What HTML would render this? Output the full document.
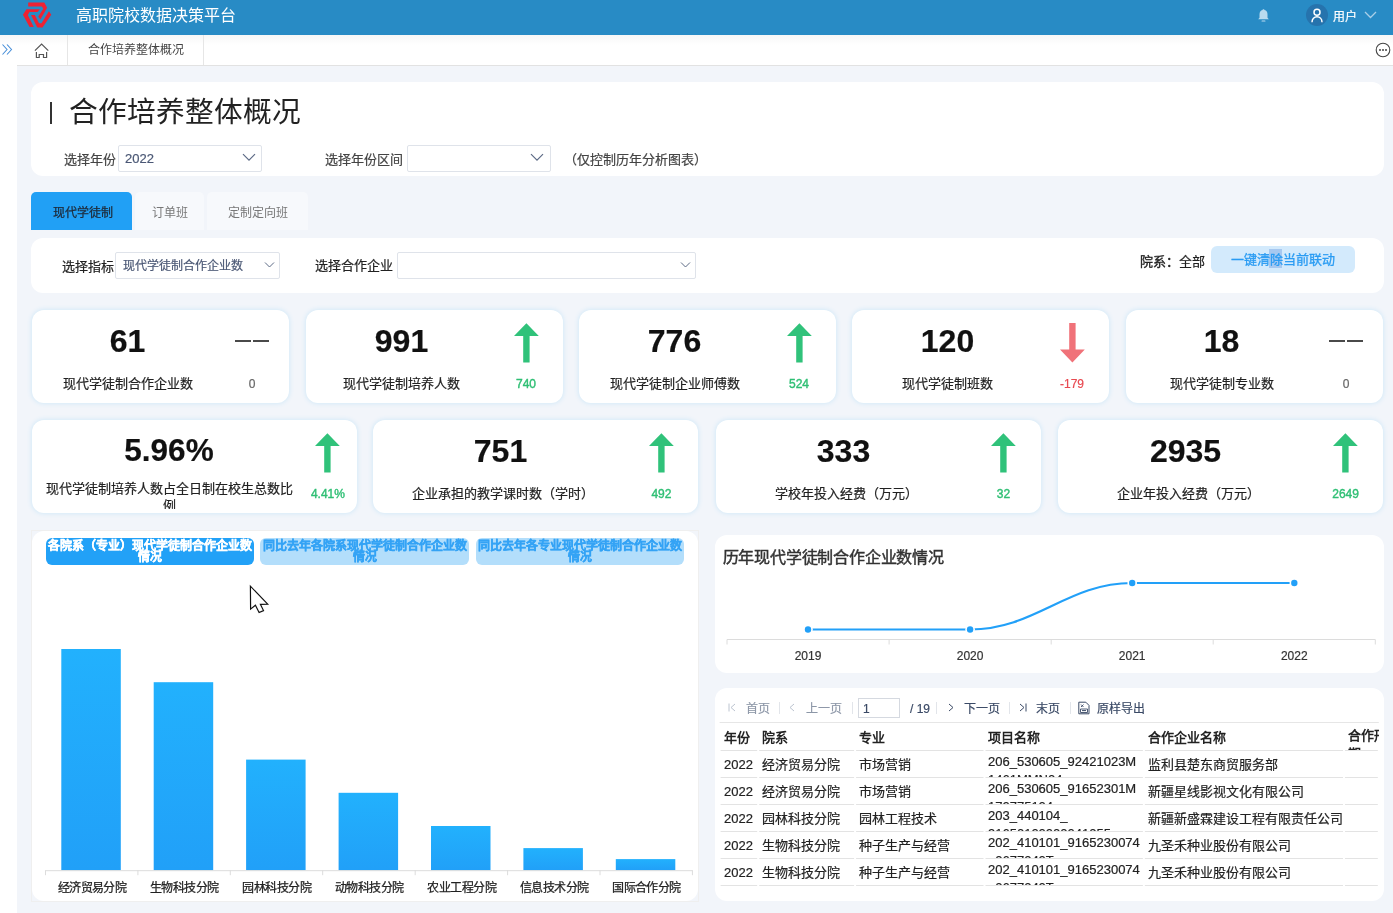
<!DOCTYPE html>
<html lang="zh-CN"><head><meta charset="utf-8">
<style>
*{box-sizing:border-box;margin:0;padding:0}
html,body{width:1393px;height:913px;overflow:hidden;background:#f2f5fa;font-family:"Liberation Sans",sans-serif;color:#333}
.t{position:absolute;white-space:nowrap;line-height:1}
.abs{position:absolute}
.panel{position:absolute;background:#fff;border-radius:12px}
.sel{position:absolute;background:#fff;border:1px solid #dfe3ea;border-radius:2px}
.card{position:absolute;background:#fff;border-radius:12px;box-shadow:0 0 4px 1px #d5eaf8}
.num{position:absolute;font-weight:bold;font-size:32px;color:#111;line-height:1;white-space:nowrap}
.lbl{position:absolute;font-size:13px;color:#222;line-height:1;white-space:nowrap}
.chg{position:absolute;font-size:12px;line-height:1;white-space:nowrap}
.green{color:#2fbf74}
.red{color:#e84a51}
.grey{color:#666}
.dash{position:absolute;height:2px;background:#4a4a4a}
.med{-webkit-text-stroke:0.3px currentColor}
body{will-change:transform}
.t,.lbl,.num,.chg{-webkit-text-stroke:0.2px currentColor}
</style></head><body>

<div class="abs" style="left:0;top:0;width:1393px;height:35px;background:#288bc5"></div>
<svg class="abs" style="left:18px;top:0" width="40" height="32" viewBox="0 0 40 32"><g fill="#ee2233">
<polygon points="10.2,2.5 26.3,2.5 29.1,7.7 22.4,19.6 20.3,16.5 25.3,8.8 23.8,6.5 10.2,6.5"/>
<polygon points="21.8,9.3 8.4,9.3 4.9,14.7 11.6,27 15.8,27 9.8,15.1 11.6,11.9 19.6,11.9"/>
<polygon points="13,15.1 16.8,15.1 21,23.2 23.5,23.2 30.9,11.2 33.3,14.7 24.5,27.4 19.3,27.4"/>
</g></svg>
<div class="t" style="left:76px;top:8px;font-size:16px;color:#fff;-webkit-text-stroke:0">高职院校数据决策平台</div>
<svg class="abs" style="left:1256px;top:8px" width="15" height="15" viewBox="0 0 15 15">
<path d="M7.5 1.2c.7 0 1 .4 1 .9 2 .5 3 2.2 3 4.3v3.3l1.3 1.6H2.2l1.3-1.6V6.4c0-2.1 1-3.8 3-4.3 0-.5.3-.9 1-.9z" fill="#b8daef"/>
<rect x="5.5" y="12.4" width="4" height="1.2" rx=".6" fill="#b8daef"/></svg>
<div class="abs" style="left:1306px;top:4px;width:22px;height:22px;border-radius:50%;background:#2673ad"></div>
<svg class="abs" style="left:1306px;top:4px" width="22" height="22" viewBox="0 0 22 22">
<circle cx="11" cy="8.2" r="3" fill="none" stroke="#fff" stroke-width="1.5"/>
<path d="M6 18.2c0-3.2 2.2-5.4 5-5.4s5 2.2 5 5.4" fill="none" stroke="#fff" stroke-width="1.5"/></svg>
<div class="t" style="left:1332.5px;top:11px;font-size:12px;color:#fff">用户</div>
<svg class="abs" style="left:1364px;top:11px" width="13" height="8" viewBox="0 0 13 8"><path d="M1 1l5.5 5.5L12 1" fill="none" stroke="#a9cfe8" stroke-width="1.3"/></svg>
<div class="abs" style="left:0;top:35px;width:1393px;height:31px;background:linear-gradient(#f7f7f7,#fff 10px)"></div>
<div class="abs" style="left:17px;top:65px;width:1376px;height:1px;background:#e2e2e2"></div>
<svg class="abs" style="left:1px;top:43px" width="12" height="13" viewBox="0 0 12 13"><path d="M1.5 1.5l4.5 5-4.5 5M6 1.5l4.5 5-4.5 5" fill="none" stroke="#4a90d9" stroke-width="1.1"/></svg>
<svg class="abs" style="left:34px;top:42.6px" width="16" height="16" viewBox="0 0 16 16"><path d="M0.9 7.6L7.6 1.1L14.3 7.6M2.4 8.9V14.5H5.2V11.5H9.5V14.5H12.6V8.9" fill="none" stroke="#555" stroke-width="1.2"/></svg>
<div class="abs" style="left:67px;top:35px;width:1px;height:30px;background:#e6e6e6"></div>
<div class="t" style="left:88px;top:44px;font-size:12px;color:#444;-webkit-text-stroke:0">合作培养整体概况</div>
<div class="abs" style="left:203px;top:35px;width:1px;height:30px;background:#e6e6e6"></div>
<svg class="abs" style="left:1375px;top:42px" width="16" height="16" viewBox="0 0 16 16"><circle cx="8" cy="8" r="6.8" fill="none" stroke="#444" stroke-width="1.1"/><circle cx="5" cy="8" r="1" fill="#444"/><circle cx="8" cy="8" r="1" fill="#444"/><circle cx="11" cy="8" r="1" fill="#444"/></svg>
<div class="abs" style="left:0;top:66px;width:17px;height:847px;background:#fff"></div>
<div class="panel" style="left:31px;top:82px;width:1353px;height:94px"></div>
<div class="abs" style="left:49.5px;top:102px;width:2.5px;height:22px;background:#333"></div>
<div class="t" style="left:69px;top:98px;font-size:28.7px;color:#222;-webkit-text-stroke:0">合作培养整体概况</div>
<div class="t" style="left:64px;top:153px;font-size:13px;color:#444">选择年份</div>
<div class="sel" style="left:118px;top:145px;width:144px;height:27px"></div>
<div class="t" style="left:125px;top:152px;font-size:13px;color:#4b5875">2022</div>
<svg class="abs" style="left:242px;top:153px" width="14" height="9" viewBox="0 0 14 9"><path d="M1 1.2l6 6 6-6" fill="none" stroke="#5d6b86" stroke-width="1.2"/></svg>
<div class="t" style="left:325px;top:153px;font-size:13px;color:#444">选择年份区间</div>
<div class="sel" style="left:407px;top:145px;width:144px;height:27px"></div>
<svg class="abs" style="left:530px;top:153px" width="14" height="9" viewBox="0 0 14 9"><path d="M1 1.2l6 6 6-6" fill="none" stroke="#5d6b86" stroke-width="1.2"/></svg>
<div class="t" style="left:563.5px;top:153px;font-size:13px;color:#444">（仅控制历年分析图表）</div>
<div class="abs" style="left:31px;top:192px;width:101px;height:38px;background:#21a0f5;border-radius:5px 5px 0 0"></div>
<div class="t med" style="left:52.5px;top:207px;font-size:12px;color:#1e2a38;-webkit-text-stroke:0.25px #1e2a38">现代学徒制</div>
<div class="abs" style="left:135px;top:192px;width:69px;height:38px;background:#f7f9fc;border-radius:5px 5px 0 0"></div>
<div class="t" style="left:152px;top:207px;font-size:12px;color:#777;-webkit-text-stroke:0">订单班</div>
<div class="abs" style="left:207px;top:192px;width:101px;height:38px;background:#f7f9fc;border-radius:5px 5px 0 0"></div>
<div class="t" style="left:228px;top:207px;font-size:12px;color:#777;-webkit-text-stroke:0">定制定向班</div>
<div class="panel" style="left:31px;top:238px;width:1353px;height:55px"></div>
<div class="t" style="left:62px;top:260px;font-size:13px;color:#222">选择指标</div>
<div class="sel" style="left:115px;top:252px;width:165px;height:27px"></div>
<div class="t" style="left:122.5px;top:260px;font-size:12px;color:#4b5875">现代学徒制合作企业数</div>
<svg class="abs" style="left:264px;top:261px" width="11" height="8" viewBox="0 0 11 8"><path d="M1 1.5l4.5 4.5L10 1.5" fill="none" stroke="#5d6b86" stroke-width="1"/></svg>
<div class="t" style="left:315px;top:259px;font-size:13px;color:#222">选择合作企业</div>
<div class="sel" style="left:397px;top:252px;width:299px;height:27px"></div>
<svg class="abs" style="left:680px;top:261px" width="11" height="8" viewBox="0 0 11 8"><path d="M1 1.5l4.5 4.5L10 1.5" fill="none" stroke="#5d6b86" stroke-width="1"/></svg>
<div class="t" style="left:1140px;top:255px;font-size:13px;color:#222"><span style="-webkit-text-stroke:0.35px #222">院系：</span>全部</div>
<div class="abs" style="left:1211px;top:246px;width:144px;height:27px;background:#d3eafc;border-radius:6px"></div>
<div class="abs" style="left:1269px;top:249px;width:13px;height:19px;background:#a6c8f0"></div>
<div class="t" style="left:1231px;top:253px;font-size:13px;color:#2a9cf3;-webkit-text-stroke:0.3px #2a9cf3">一键清除当前联动</div>
<div class="card" style="left:32px;top:310px;width:257px;height:93px"></div>
<div class="num" style="left:-22.5px;top:325px;width:300px;text-align:center;">61</div>
<div class="lbl" style="left:-22.5px;top:377px;width:300px;text-align:center;">现代学徒制合作企业数</div>
<div class="dash" style="left:235px;top:340px;width:16px"></div>
<div class="dash" style="left:252.5px;top:340px;width:16px"></div>
<div class="chg grey" style="left:102px;top:378px;width:300px;text-align:center;">0</div>
<div class="card" style="left:306px;top:310px;width:257px;height:93px"></div>
<div class="num" style="left:251.5px;top:325px;width:300px;text-align:center;">991</div>
<div class="lbl" style="left:251.5px;top:377px;width:300px;text-align:center;">现代学徒制培养人数</div>
<svg class="abs" style="left:513.5px;top:322.5px" width="25" height="40" viewBox="0 0 25 40"><polygon points="12.4,0.3 24.8,13 15.6,13 15.6,39.5 9.2,39.5 9.2,13 0,13" fill="#30c27a"/></svg>
<div class="chg green" style="left:376px;top:378px;width:300px;text-align:center;-webkit-text-stroke:0.4px currentColor">740</div>
<div class="card" style="left:579px;top:310px;width:257px;height:93px"></div>
<div class="num" style="left:524.5px;top:325px;width:300px;text-align:center;">776</div>
<div class="lbl" style="left:524.5px;top:377px;width:300px;text-align:center;">现代学徒制企业师傅数</div>
<svg class="abs" style="left:786.5px;top:322.5px" width="25" height="40" viewBox="0 0 25 40"><polygon points="12.4,0.3 24.8,13 15.6,13 15.6,39.5 9.2,39.5 9.2,13 0,13" fill="#30c27a"/></svg>
<div class="chg green" style="left:649px;top:378px;width:300px;text-align:center;-webkit-text-stroke:0.4px currentColor">524</div>
<div class="card" style="left:852px;top:310px;width:257px;height:93px"></div>
<div class="num" style="left:797.5px;top:325px;width:300px;text-align:center;">120</div>
<div class="lbl" style="left:797.5px;top:377px;width:300px;text-align:center;">现代学徒制班数</div>
<svg class="abs" style="left:1059.5px;top:322.5px" width="25" height="40" viewBox="0 0 25 40"><polygon points="9.2,0 15.6,0 15.6,26.5 24.8,26.5 12.4,39.5 0,26.5 9.2,26.5" fill="#f07279"/></svg>
<div class="chg red" style="left:922px;top:378px;width:300px;text-align:center;">-179</div>
<div class="card" style="left:1126px;top:310px;width:257px;height:93px"></div>
<div class="num" style="left:1071.5px;top:325px;width:300px;text-align:center;">18</div>
<div class="lbl" style="left:1071.5px;top:377px;width:300px;text-align:center;">现代学徒制专业数</div>
<div class="dash" style="left:1329px;top:340px;width:16px"></div>
<div class="dash" style="left:1346.5px;top:340px;width:16px"></div>
<div class="chg grey" style="left:1196px;top:378px;width:300px;text-align:center;">0</div>
<div class="card" style="left:32px;top:420px;width:325px;height:93px"></div>
<div class="num" style="left:19px;top:435px;width:300px;text-align:center;font-size:31.5px">5.96%</div>
<div class="abs" style="left:32px;top:420px;width:325px;height:89px;overflow:hidden"><div class="lbl" style="left:-13px;top:59.5px;width:300px;text-align:center;line-height:17.5px">现代学徒制培养人数占全日制在校生总数比<br>例</div></div>
<svg class="abs" style="left:315.4px;top:432.5px" width="25" height="40" viewBox="0 0 25 40"><polygon points="12.4,0.3 24.8,13 15.6,13 15.6,39.5 9.2,39.5 9.2,13 0,13" fill="#30c27a"/></svg>
<div class="chg green" style="left:177.89999999999998px;top:488px;width:300px;text-align:center;-webkit-text-stroke:0.4px currentColor">4.41%</div>
<div class="card" style="left:373px;top:420px;width:325px;height:93px"></div>
<div class="num" style="left:350.5px;top:435px;width:300px;text-align:center;">751</div>
<div class="lbl" style="left:353.0px;top:487px;width:300px;text-align:center;">企业承担的教学课时数（学时）</div>
<svg class="abs" style="left:648.9px;top:432.5px" width="25" height="40" viewBox="0 0 25 40"><polygon points="12.4,0.3 24.8,13 15.6,13 15.6,39.5 9.2,39.5 9.2,13 0,13" fill="#30c27a"/></svg>
<div class="chg green" style="left:511.4px;top:488px;width:300px;text-align:center;-webkit-text-stroke:0.4px currentColor">492</div>
<div class="card" style="left:716px;top:420px;width:325px;height:93px"></div>
<div class="num" style="left:693.5px;top:435px;width:300px;text-align:center;">333</div>
<div class="lbl" style="left:696.0px;top:487px;width:300px;text-align:center;">学校年投入经费（万元）</div>
<svg class="abs" style="left:991.0px;top:432.5px" width="25" height="40" viewBox="0 0 25 40"><polygon points="12.4,0.3 24.8,13 15.6,13 15.6,39.5 9.2,39.5 9.2,13 0,13" fill="#30c27a"/></svg>
<div class="chg green" style="left:853.5px;top:488px;width:300px;text-align:center;-webkit-text-stroke:0.4px currentColor">32</div>
<div class="card" style="left:1058px;top:420px;width:325px;height:93px"></div>
<div class="num" style="left:1035.5px;top:435px;width:300px;text-align:center;">2935</div>
<div class="lbl" style="left:1038.0px;top:487px;width:300px;text-align:center;">企业年投入经费（万元）</div>
<svg class="abs" style="left:1333.1px;top:432.5px" width="25" height="40" viewBox="0 0 25 40"><polygon points="12.4,0.3 24.8,13 15.6,13 15.6,39.5 9.2,39.5 9.2,13 0,13" fill="#30c27a"/></svg>
<div class="chg green" style="left:1195.6px;top:488px;width:300px;text-align:center;-webkit-text-stroke:0.4px currentColor">2649</div>
<div class="abs" style="left:31px;top:530px;width:668px;height:372px;border:1px solid #efefef"></div>
<div class="panel" style="left:32px;top:531px;width:666px;height:370px"></div>
<div class="abs" style="left:46px;top:538px;width:208px;height:27px;background:#22a1f7;border-radius:6px"></div>
<div class="abs" style="left:26px;top:541px;width:248px;text-align:center;font-size:12px;line-height:11px;font-weight:bold;color:#fff;white-space:nowrap;-webkit-text-stroke:0.35px #fff">各院系（专业）现代学徒制合作企业数<br>情况</div>
<div class="abs" style="left:260px;top:538px;width:209px;height:27px;background:#b3defb;border-radius:6px"></div>
<div class="abs" style="left:240px;top:541px;width:249px;text-align:center;font-size:12px;line-height:11px;font-weight:bold;color:#34a3f5;white-space:nowrap;-webkit-text-stroke:0.35px #34a3f5">同比去年各院系现代学徒制合作企业数<br>情况</div>
<div class="abs" style="left:476px;top:538px;width:208px;height:27px;background:#b3defb;border-radius:6px"></div>
<div class="abs" style="left:456px;top:541px;width:248px;text-align:center;font-size:12px;line-height:11px;font-weight:bold;color:#34a3f5;white-space:nowrap;-webkit-text-stroke:0.35px #34a3f5">同比去年各专业现代学徒制合作企业数<br>情况</div>
<svg class="abs" style="left:0;top:0" width="1393" height="913" viewBox="0 0 1393 913">
<defs><linearGradient id="bg" x1="0" y1="0" x2="0" y2="1"><stop offset="0" stop-color="#22b1fd"/><stop offset="1" stop-color="#21a0f8"/></linearGradient></defs>
<rect x="61.3" y="649.0" width="59.5" height="221.2" fill="url(#bg)"/>
<rect x="153.7" y="682.2" width="59.5" height="188.0" fill="url(#bg)"/>
<rect x="246.1" y="759.6" width="59.5" height="110.6" fill="url(#bg)"/>
<rect x="338.6" y="792.8" width="59.5" height="77.4" fill="url(#bg)"/>
<rect x="431.0" y="826.0" width="59.5" height="44.2" fill="url(#bg)"/>
<rect x="523.4" y="848.1" width="59.5" height="22.1" fill="url(#bg)"/>
<rect x="615.8" y="859.1" width="59.5" height="11.1" fill="url(#bg)"/>
<path d="M45.5 870.7H692.4" stroke="#dcdcdc" stroke-width="1"/>
<path d="M45.5 870.2v5" stroke="#dcdcdc" stroke-width="1"/>
<path d="M137.9 870.2v5" stroke="#dcdcdc" stroke-width="1"/>
<path d="M230.3 870.2v5" stroke="#dcdcdc" stroke-width="1"/>
<path d="M322.7 870.2v5" stroke="#dcdcdc" stroke-width="1"/>
<path d="M415.2 870.2v5" stroke="#dcdcdc" stroke-width="1"/>
<path d="M507.6 870.2v5" stroke="#dcdcdc" stroke-width="1"/>
<path d="M600.0 870.2v5" stroke="#dcdcdc" stroke-width="1"/>
<path d="M692.4 870.2v5" stroke="#dcdcdc" stroke-width="1"/>
<path d="M250.4 586.2L250.6 609.1L255.4 605.2L259.1 612.5L263.5 610.6L260.4 604.3L267.7 604.1Z" fill="#fff" stroke="#111" stroke-width="1.2"/>
</svg>
<div class="t" style="left:32.0px;top:882px;width:120px;text-align:center;font-size:12px;letter-spacing:-0.55px;color:#222;-webkit-text-stroke:0.25px #222">经济贸易分院</div>
<div class="t" style="left:124.4px;top:882px;width:120px;text-align:center;font-size:12px;letter-spacing:-0.55px;color:#222;-webkit-text-stroke:0.25px #222">生物科技分院</div>
<div class="t" style="left:216.8px;top:882px;width:120px;text-align:center;font-size:12px;letter-spacing:-0.55px;color:#222;-webkit-text-stroke:0.25px #222">园林科技分院</div>
<div class="t" style="left:309.2px;top:882px;width:120px;text-align:center;font-size:12px;letter-spacing:-0.55px;color:#222;-webkit-text-stroke:0.25px #222">动物科技分院</div>
<div class="t" style="left:401.7px;top:882px;width:120px;text-align:center;font-size:12px;letter-spacing:-0.55px;color:#222;-webkit-text-stroke:0.25px #222">农业工程分院</div>
<div class="t" style="left:494.1px;top:882px;width:120px;text-align:center;font-size:12px;letter-spacing:-0.55px;color:#222;-webkit-text-stroke:0.25px #222">信息技术分院</div>
<div class="t" style="left:586.5px;top:882px;width:120px;text-align:center;font-size:12px;letter-spacing:-0.55px;color:#222;-webkit-text-stroke:0.25px #222">国际合作分院</div>
<div class="panel" style="left:715px;top:535px;width:669px;height:138px"></div>
<div class="t" style="left:722.5px;top:550px;font-size:16px;letter-spacing:-0.2px;color:#333;-webkit-text-stroke:0.45px #333">历年现代学徒制合作企业数情况</div>
<svg class="abs" style="left:0;top:0" width="1393" height="913" viewBox="0 0 1393 913">
<path d="M727.0 639.5H1375.3" stroke="#dcdcdc" stroke-width="1"/>
<path d="M727.0 639.5v5" stroke="#dcdcdc" stroke-width="1"/>
<path d="M889.1 639.5v5" stroke="#dcdcdc" stroke-width="1"/>
<path d="M1051.2 639.5v5" stroke="#dcdcdc" stroke-width="1"/>
<path d="M1213.2 639.5v5" stroke="#dcdcdc" stroke-width="1"/>
<path d="M1375.3 639.5v5" stroke="#dcdcdc" stroke-width="1"/>
<path d="M808.0 629.5L970.1 629.5C1035.1 629.5 1067.2 583 1132.2 583L1294.3 583" fill="none" stroke="#22a0f8" stroke-width="2.2"/>
<circle cx="808.0" cy="629.5" r="4.8" fill="#fff"/><circle cx="808.0" cy="629.5" r="3.2" fill="#22a0f8"/>
<circle cx="970.1" cy="629.5" r="4.8" fill="#fff"/><circle cx="970.1" cy="629.5" r="3.2" fill="#22a0f8"/>
<circle cx="1132.2" cy="583" r="4.8" fill="#fff"/><circle cx="1132.2" cy="583" r="3.2" fill="#22a0f8"/>
<circle cx="1294.3" cy="583" r="4.8" fill="#fff"/><circle cx="1294.3" cy="583" r="3.2" fill="#22a0f8"/>
</svg>
<div class="t" style="left:768.0px;top:650px;width:80px;text-align:center;font-size:12px;color:#333">2019</div>
<div class="t" style="left:930.1px;top:650px;width:80px;text-align:center;font-size:12px;color:#333">2020</div>
<div class="t" style="left:1092.2px;top:650px;width:80px;text-align:center;font-size:12px;color:#333">2021</div>
<div class="t" style="left:1254.3px;top:650px;width:80px;text-align:center;font-size:12px;color:#333">2022</div>
<div class="panel" style="left:715px;top:688px;width:669px;height:213px"></div>
<svg class="abs" style="left:727px;top:702px" width="10" height="11" viewBox="0 0 10 11"><path d="M2 1.5v8M8 2L4 5.5 8 9" fill="none" stroke="#bcc4d0" stroke-width="1"/></svg>
<div class="t" style="left:745.5px;top:703px;font-size:12px;color:#8d97a8">首页</div>
<div class="abs" style="left:779px;top:702px;width:1px;height:12px;background:#e2e5ea"></div>
<svg class="abs" style="left:788px;top:702px" width="8" height="11" viewBox="0 0 8 11"><path d="M6 2L2 5.5 6 9" fill="none" stroke="#bcc4d0" stroke-width="1"/></svg>
<div class="t" style="left:806px;top:703px;font-size:12px;color:#8d97a8">上一页</div>
<div class="abs" style="left:852px;top:702px;width:1px;height:12px;background:#e2e5ea"></div>
<div class="abs" style="left:858px;top:698px;width:42px;height:20px;border:1px solid #d5d9e0;background:#fff"></div>
<div class="t" style="left:863px;top:703px;font-size:12px;color:#3b4a66">1</div>
<div class="t" style="left:910px;top:703px;font-size:12px;color:#3b4a66">/ 19</div>
<div class="abs" style="left:936px;top:702px;width:1px;height:12px;background:#e2e5ea"></div>
<svg class="abs" style="left:947px;top:702px" width="8" height="11" viewBox="0 0 8 11"><path d="M2 2l4 3.5L2 9" fill="none" stroke="#3b4a66" stroke-width="1"/></svg>
<div class="t" style="left:963.5px;top:703px;font-size:12px;color:#3b4a66">下一页</div>
<div class="abs" style="left:1009px;top:702px;width:1px;height:12px;background:#e2e5ea"></div>
<svg class="abs" style="left:1018px;top:702px" width="10" height="11" viewBox="0 0 10 11"><path d="M2 2l4 3.5L2 9M8 1.5v8" fill="none" stroke="#3b4a66" stroke-width="1"/></svg>
<div class="t" style="left:1036px;top:703px;font-size:12px;color:#3b4a66">末页</div>
<div class="abs" style="left:1070px;top:702px;width:1px;height:12px;background:#e2e5ea"></div>
<svg class="abs" style="left:1077px;top:701px" width="14" height="14" viewBox="0 0 14 14"><path d="M1.8 1.2h7l3.2 3.2v8.4H1.8z" fill="none" stroke="#3b4a66" stroke-width="1"/><path d="M4 3.5l2.5 2.5M6.5 3.5L4 6" stroke="#3b4a66" stroke-width=".9"/><path d="M3.5 8h7v3.5h-7z" fill="none" stroke="#3b4a66" stroke-width=".9"/><path d="M5 9.6h4" stroke="#3b4a66" stroke-width="1"/></svg>
<div class="t" style="left:1097px;top:703px;font-size:12px;color:#3b4a66">原样导出</div>
<svg class="abs" style="left:0;top:0" width="1393" height="913" viewBox="0 0 1393 913">
<path d="M719.6 722.5H1378.8" stroke="#e6e6e6" stroke-width="1"/>
<path d="M720.6 750.5H757.2" stroke="#e3e3e3" stroke-width="1"/>
<path d="M759.2 750.5H854.1" stroke="#e3e3e3" stroke-width="1"/>
<path d="M856.1 750.5H983.5" stroke="#e3e3e3" stroke-width="1"/>
<path d="M985.5 750.5H1142.9" stroke="#e3e3e3" stroke-width="1"/>
<path d="M1144.9 750.5H1343.0" stroke="#e3e3e3" stroke-width="1"/>
<path d="M1345.0 750.5H1377.8" stroke="#e3e3e3" stroke-width="1"/>
<path d="M720.6 777.5H757.2" stroke="#e3e3e3" stroke-width="1"/>
<path d="M759.2 777.5H854.1" stroke="#e3e3e3" stroke-width="1"/>
<path d="M856.1 777.5H983.5" stroke="#e3e3e3" stroke-width="1"/>
<path d="M985.5 777.5H1142.9" stroke="#e3e3e3" stroke-width="1"/>
<path d="M1144.9 777.5H1343.0" stroke="#e3e3e3" stroke-width="1"/>
<path d="M1345.0 777.5H1377.8" stroke="#e3e3e3" stroke-width="1"/>
<path d="M720.6 804.5H757.2" stroke="#e3e3e3" stroke-width="1"/>
<path d="M759.2 804.5H854.1" stroke="#e3e3e3" stroke-width="1"/>
<path d="M856.1 804.5H983.5" stroke="#e3e3e3" stroke-width="1"/>
<path d="M985.5 804.5H1142.9" stroke="#e3e3e3" stroke-width="1"/>
<path d="M1144.9 804.5H1343.0" stroke="#e3e3e3" stroke-width="1"/>
<path d="M1345.0 804.5H1377.8" stroke="#e3e3e3" stroke-width="1"/>
<path d="M720.6 831.5H757.2" stroke="#e3e3e3" stroke-width="1"/>
<path d="M759.2 831.5H854.1" stroke="#e3e3e3" stroke-width="1"/>
<path d="M856.1 831.5H983.5" stroke="#e3e3e3" stroke-width="1"/>
<path d="M985.5 831.5H1142.9" stroke="#e3e3e3" stroke-width="1"/>
<path d="M1144.9 831.5H1343.0" stroke="#e3e3e3" stroke-width="1"/>
<path d="M1345.0 831.5H1377.8" stroke="#e3e3e3" stroke-width="1"/>
<path d="M720.6 858.5H757.2" stroke="#e3e3e3" stroke-width="1"/>
<path d="M759.2 858.5H854.1" stroke="#e3e3e3" stroke-width="1"/>
<path d="M856.1 858.5H983.5" stroke="#e3e3e3" stroke-width="1"/>
<path d="M985.5 858.5H1142.9" stroke="#e3e3e3" stroke-width="1"/>
<path d="M1144.9 858.5H1343.0" stroke="#e3e3e3" stroke-width="1"/>
<path d="M1345.0 858.5H1377.8" stroke="#e3e3e3" stroke-width="1"/>
<path d="M720.6 885.5H757.2" stroke="#e3e3e3" stroke-width="1"/>
<path d="M759.2 885.5H854.1" stroke="#e3e3e3" stroke-width="1"/>
<path d="M856.1 885.5H983.5" stroke="#e3e3e3" stroke-width="1"/>
<path d="M985.5 885.5H1142.9" stroke="#e3e3e3" stroke-width="1"/>
<path d="M1144.9 885.5H1343.0" stroke="#e3e3e3" stroke-width="1"/>
<path d="M1345.0 885.5H1377.8" stroke="#e3e3e3" stroke-width="1"/>
</svg>
<div class="t" style="left:724px;top:731px;font-size:13px;font-weight:bold;color:#222;-webkit-text-stroke:0">年份</div>
<div class="t" style="left:761.6px;top:731px;font-size:13px;font-weight:bold;color:#222;-webkit-text-stroke:0">院系</div>
<div class="t" style="left:858.8px;top:731px;font-size:13px;font-weight:bold;color:#222;-webkit-text-stroke:0">专业</div>
<div class="t" style="left:988px;top:731px;font-size:13px;font-weight:bold;color:#222;-webkit-text-stroke:0">项目名称</div>
<div class="t" style="left:1147.7px;top:731px;font-size:13px;font-weight:bold;color:#222;-webkit-text-stroke:0">合作企业名称</div>
<div class="abs" style="left:1347px;top:724px;width:32px;height:26px;overflow:hidden"><div class="t" style="left:0.5px;top:3px;font-size:13px;font-weight:bold;color:#222;line-height:18px;-webkit-text-stroke:0">合作形式<br>期</div></div>
<div class="t" style="left:724px;top:757.5px;font-size:13px;color:#222">2022</div>
<div class="t" style="left:761.6px;top:757.5px;font-size:13px;color:#222">经济贸易分院</div>
<div class="t" style="left:858.8px;top:757.5px;font-size:13px;color:#222">市场营销</div>
<div class="abs" style="left:986px;top:751px;width:157px;height:26px;overflow:hidden"><div class="t" style="left:2px;top:2px;font-size:13px;line-height:18px;color:#222">206_530605_92421023M<br>1461MMN04</div></div>
<div class="t" style="left:1147.7px;top:757.5px;font-size:13px;color:#222">监利县楚东商贸服务部</div>
<div class="t" style="left:724px;top:784.5px;font-size:13px;color:#222">2022</div>
<div class="t" style="left:761.6px;top:784.5px;font-size:13px;color:#222">经济贸易分院</div>
<div class="t" style="left:858.8px;top:784.5px;font-size:13px;color:#222">市场营销</div>
<div class="abs" style="left:986px;top:778px;width:157px;height:26px;overflow:hidden"><div class="t" style="left:2px;top:2px;font-size:13px;line-height:18px;color:#222">206_530605_91652301M<br>170775104</div></div>
<div class="t" style="left:1147.7px;top:784.5px;font-size:13px;color:#222">新疆星线影视文化有限公司</div>
<div class="t" style="left:724px;top:811.5px;font-size:13px;color:#222">2022</div>
<div class="t" style="left:761.6px;top:811.5px;font-size:13px;color:#222">园林科技分院</div>
<div class="t" style="left:858.8px;top:811.5px;font-size:13px;color:#222">园林工程技术</div>
<div class="abs" style="left:986px;top:805px;width:157px;height:26px;overflow:hidden"><div class="t" style="left:2px;top:2px;font-size:13px;line-height:18px;color:#222">203_440104_<br>91650100000041055</div></div>
<div class="t" style="left:1147.7px;top:811.5px;font-size:13px;color:#222">新疆新盛霖建设工程有限责任公司</div>
<div class="t" style="left:724px;top:838.5px;font-size:13px;color:#222">2022</div>
<div class="t" style="left:761.6px;top:838.5px;font-size:13px;color:#222">生物科技分院</div>
<div class="t" style="left:858.8px;top:838.5px;font-size:13px;color:#222">种子生产与经营</div>
<div class="abs" style="left:986px;top:832px;width:157px;height:26px;overflow:hidden"><div class="t" style="left:2px;top:2px;font-size:13px;line-height:18px;color:#222">202_410101_9165230074<br>_0677040T</div></div>
<div class="t" style="left:1147.7px;top:838.5px;font-size:13px;color:#222">九圣禾种业股份有限公司</div>
<div class="t" style="left:724px;top:865.5px;font-size:13px;color:#222">2022</div>
<div class="t" style="left:761.6px;top:865.5px;font-size:13px;color:#222">生物科技分院</div>
<div class="t" style="left:858.8px;top:865.5px;font-size:13px;color:#222">种子生产与经营</div>
<div class="abs" style="left:986px;top:859px;width:157px;height:26px;overflow:hidden"><div class="t" style="left:2px;top:2px;font-size:13px;line-height:18px;color:#222">202_410101_9165230074<br>_0677040T</div></div>
<div class="t" style="left:1147.7px;top:865.5px;font-size:13px;color:#222">九圣禾种业股份有限公司</div>
</body></html>
